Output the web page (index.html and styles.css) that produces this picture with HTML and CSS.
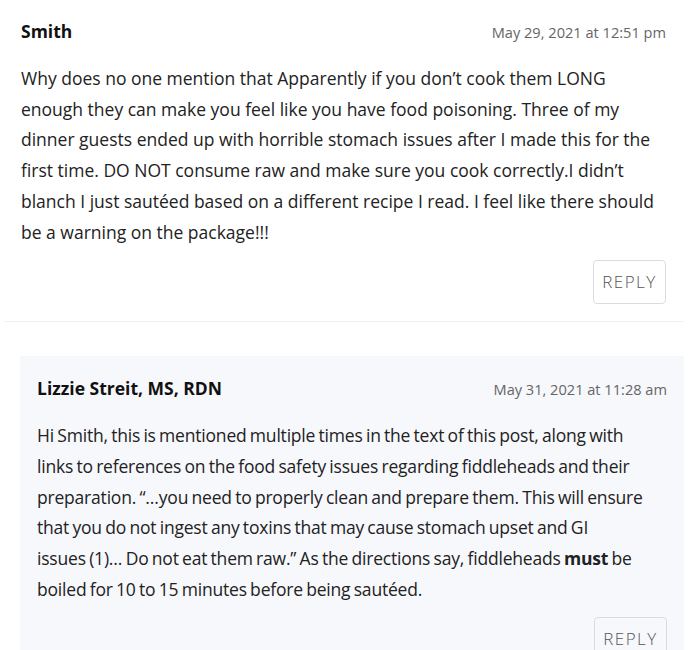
FILE: index.html
```html
<!DOCTYPE html>
<html>
<head>
<meta charset="utf-8">
<link rel="stylesheet" href="styles.css">
</head>
<body>
<ol class="comment-list">
  <li class="comment">
    <article class="comment-body">
      <header class="comment-meta">
        <b class="author">Smith</b>
        <time class="date">May 29, 2021 at 12:51 pm</time>
      </header>
      <p class="comment-content">Why does no one mention that Apparently if you don’t cook them LONG enough they can make you feel like you have food poisoning. Three of my dinner guests ended up with horrible stomach issues after I made this for the first time. DO NOT consume raw and make sure you cook correctly.I didn’t blanch I just sautéed based on a different recipe I read. I feel like there should be a warning on the package!!!</p>
      <div class="reply-row"><a class="reply">REPLY</a></div>
    </article>
    <ol class="children">
      <li class="comment child">
        <article class="comment-body">
          <header class="comment-meta">
            <b class="author">Lizzie Streit, MS, RDN</b>
            <time class="date">May 31, 2021 at 11:28 am</time>
          </header>
          <p class="comment-content">Hi Smith, this is mentioned multiple times in the text of this post, along with<br>links to references on the food safety issues regarding fiddleheads and their preparation. “…you need to properly clean and prepare them. This will ensure that you do not ingest any toxins that may cause stomach upset and GI<br>issues (1)… Do not eat them raw.” As the directions say, fiddleheads <strong>must</strong> be boiled for 10 to 15 minutes before being sautéed.</p>
          <div class="reply-row"><a class="reply">REPLY</a></div>
        </article>
      </li>
    </ol>
  </li>
</ol>
</body>
</html>
```

FILE: styles.css
```css
html, body {
  margin: 0;
  padding: 0;
  background: #fff;
}
body {
  font-family: "Open Sans", "Lato", sans-serif;
  color: #222;
}
.comment-list, .children {
  list-style: none;
  margin: 0;
  padding: 0;
}
.comment-list {
  padding: 2px 16px 0 4px;
}
.comment-body {
  padding: 17px 18px 17px 17px;
  border-bottom: 1px solid #f1f1f1;
}
.comment-meta {
  display: flex;
  justify-content: space-between;
  align-items: baseline;
}
.author {
  font-size: 17.5px;
  font-weight: 700;
  color: #111;
}
.date {
  font-size: 14.6px;
  color: #666;
}
.comment-content {
  margin: 20px 0 0;
  font-size: 17.5px;
  line-height: 30.7px;
  color: #222;
}
.comment-content strong {
  font-weight: 700;
}
.reply-row {
  display: flex;
  justify-content: flex-end;
  margin-top: 13px;
}
.reply {
  display: block;
  width: 73px;
  height: 44px;
  box-sizing: border-box;
  border: 1px solid #dcdcdc;
  border-radius: 4px;
  font-size: 17px;
  font-weight: 300;
  line-height: 42px;
  letter-spacing: 1.5px;
  text-align: center;
  color: #555;
}
.children {
  margin: 34px 0 0 16px;
}
.child .comment-body {
  background: #f7f8fc;
  border-bottom: 0;
  padding: 20px 17px 16px 17px;
}
.child .comment-content {
  letter-spacing: -0.2px;
  word-spacing: -1px;
}
```
